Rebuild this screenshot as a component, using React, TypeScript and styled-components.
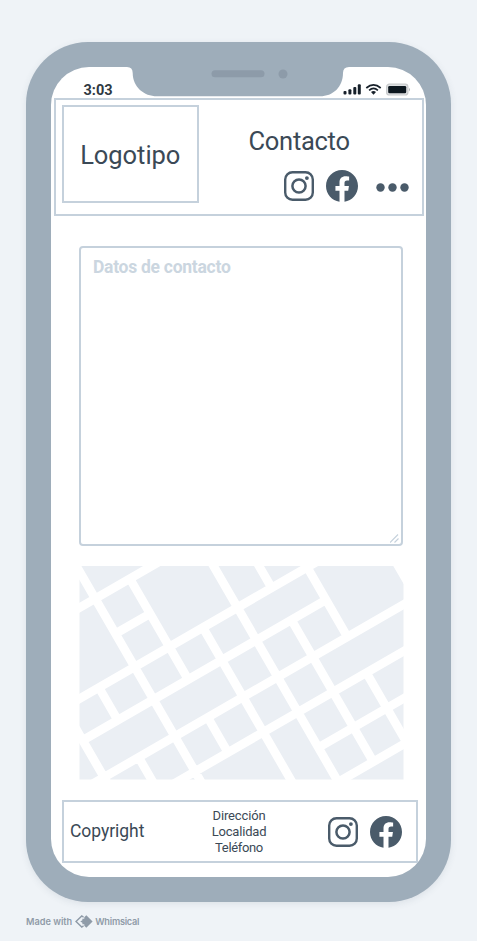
import React from "react";
import styled, { createGlobalStyle } from "styled-components";

const ink = "#3b4956";
const iconInk = "#4a5b6a";
const line = "#c5d1dc";
const bezel = "#9eadba";

const GlobalStyle = createGlobalStyle`
  *, *::before, *::after { box-sizing: border-box; }
  body { margin: 0; background: #eff3f7; font-family: Roboto, "Liberation Sans", sans-serif; }
`;

const Page = styled.main`
  width: 477px;
  height: 941px;
  padding: 42px 0 0 26px;
  overflow: hidden;
`;

const Phone = styled.div`
  width: 424.5px;
  height: 859.5px;
  padding: 25px 24.5px 24.5px 25px;
  border-radius: 62px;
  background: ${bezel};
  box-shadow: 0 2px 7px rgba(60, 80, 100, 0.1);
`;

const Screen = styled.div`
  position: relative;
  display: flex;
  flex-direction: column;
  width: 375px;
  height: 810px;
  border-radius: 38px;
  background: #fff;
`;

const Notch = styled.svg`
  position: absolute;
  left: 76px;
  top: -1px;
`;

const StatusBar = styled.div`
  display: flex;
  justify-content: space-between;
  align-items: flex-start;
  height: 30.5px;
  padding: 0 15px 0 32.5px;
`;

const Indicators = styled.svg`
  margin-top: 16px;
`;

const Label = styled.span<{ $size: number; $spacing?: number; $weight?: number; $color?: string; $leading?: number }>`
  font-size: ${(p) => p.$size}px;
  line-height: ${(p) => p.$leading ?? Math.round(p.$size * 1.2)}px;
  letter-spacing: ${(p) => p.$spacing ?? 0}px;
  font-weight: ${(p) => p.$weight ?? 400};
  color: ${(p) => p.$color ?? ink};
  white-space: nowrap;
`;

const Clock = styled(Label)`
  margin-top: 15px;
`;

const Header = styled.header`
  display: flex;
  width: 369.5px;
  height: 118.5px;
  margin-left: 3px;
  padding: 6px;
  border: 2px solid ${line};
  flex-shrink: 0;
`;

const LogoBox = styled.div`
  display: flex;
  align-items: center;
  justify-content: center;
  width: 136.5px;
  height: 98px;
  margin-top: -0.5px;
  padding-top: 2px;
  border: 2px solid ${line};
`;

const HeaderSide = styled.div`
  display: flex;
  flex-direction: column;
  flex: 1;
  padding: 20px 7px 0 50px;
`;

const HeaderIcons = styled.div`
  display: flex;
  justify-content: flex-end;
  align-items: center;
  margin-top: 13px;
`;

const Icon = styled.svg<{ $gap?: number }>`
  flex-shrink: 0;
  margin-left: ${(p) => p.$gap ?? 0}px;
`;

const MoreDots = styled(Icon)`
  margin-top: 3px;
`;

const ContactArea = styled.section`
  position: relative;
  width: 323.5px;
  height: 300px;
  margin: 29.5px 0 0 28px;
  padding: 9px 12px;
  border: 2px solid ${line};
  border-radius: 4px;
  flex-shrink: 0;
`;

const ResizeGrip = styled.svg`
  position: absolute;
  right: 2px;
  bottom: 1px;
`;

const MapPanel = styled.svg`
  display: block;
  margin: 20.5px 0 0 28px;
  flex-shrink: 0;
`;

const Footer = styled.footer`
  display: grid;
  grid-template-columns: 100px 138px 1fr;
  align-items: center;
  width: 355.5px;
  height: 63.5px;
  margin: 19.5px 0 0 11px;
  padding: 1px 14px 0 6px;
  border: 2px solid ${line};
  flex-shrink: 0;
`;

const Address = styled.div`
  display: flex;
  flex-direction: column;
  align-items: center;
`;

const FooterIcons = styled.div`
  display: flex;
  justify-content: flex-end;
  align-items: center;
`;

const Credit = styled.div`
  display: flex;
  align-items: center;
  height: 16px;
  margin-top: 12px;
  color: #8f9ba8;
  font-family: Inter, sans-serif;
`;

const CreditText = styled.span<{ $spacing: number }>`
  font-size: 9.2px;
  font-weight: 600;
  line-height: 16px;
  letter-spacing: ${(p) => p.$spacing}px;
  white-space: nowrap;
`;

const CreditMark = styled.svg`
  margin: 0 2px 0 3px;
`;

const InstagramIcon = () => (
  <Icon width="30" height="30" viewBox="0 0 30 30" fill="none" stroke={iconInk}>
    <rect x="1.2" y="1.2" width="27.6" height="27.6" rx="7.3" strokeWidth="2.4" />
    <circle cx="15" cy="15" r="6.6" strokeWidth="2.5" />
    <circle cx="22.9" cy="7.1" r="1.9" fill={iconInk} stroke="none" />
  </Icon>
);

const FacebookIcon = () => (
  <Icon $gap={12} width="32" height="32" viewBox="8 8 496 496" fill={iconInk}>
    <path d="M504 256C504 119 393 8 256 8S8 119 8 256c0 123.78 90.69 226.38 209.25 245V327.69h-63V256h63v-54.64c0-62.15 37-96.48 93.67-96.48 27.14 0 55.52 4.84 55.52 4.84v61h-31.28c-30.8 0-40.41 19.12-40.41 38.73V256h68.78l-11 71.69h-57.78V501C413.31 482.38 504 379.78 504 256z" />
  </Icon>
);

const MoreIcon = () => (
  <MoreDots $gap={17.5} width="33" height="9" viewBox="0 0 33 9" fill={iconInk}>
    <circle cx="4.5" cy="4.5" r="4.2" />
    <circle cx="16.5" cy="4.5" r="4.2" />
    <circle cx="28.5" cy="4.5" r="4.2" />
  </MoreDots>
);

// Streets as [intercept, x start, x end] along two perpendicular directions.
const risingStreets = [
  [42, -10, 85],
  [133, -10, 245],
  [176.5, 3.7, 246.8],
  [225.7, 10, 340],
  [272.5, 90, 340],
  [319.7, 240, 340],
  [365.6, 250, 340],
  [88.7, 36.5, 71],
];
const fallingStreets = [
  [4.5, -10, 130],
  [-75.5, 51, 109],
  [-233, 128, 265],
  [-153, 124, 220],
  [87, 20, 38.8],
  [168, -10, 35],
  [88, 59.6, 80],
  [-71.5, 128.7, 149],
  [-311.8, 174, 192.6],
  [-394, 228.3, 268.4],
  [-314, 212.4, 294.3],
  [-391, 287.4, 340],
  [-553, 312, 340],
];

const street = (slope: number) => ([c, from, to]: number[]) =>
  `M${from} ${c + slope * from}L${to} ${c + slope * to}`;

const streets = [
  ...risingStreets.map(street(-0.577)),
  ...fallingStreets.map(street(1.732)),
].join("");

export default function App() {
  return (
    <>
      <GlobalStyle />
      <Page>
        <Phone>
          <Screen>
            <Notch width="229" height="31" viewBox="0 0 229 31">
              <path
                d="M0 0H229V1H222Q216 1 216 7C216 21 206 30.3 193 30.3H30C17 30.3 5.7 21 5.7 7Q5.7 1 0 1Z"
                fill={bezel}
              />
              <rect x="84.5" y="4.3" width="53" height="7" rx="3.5" fill="#8d9ba9" />
              <circle cx="156" cy="8" r="4.5" fill="#8d9ba9" />
            </Notch>
            <StatusBar>
              <Clock $size={14.5} $weight={700} $leading={18} $color="#303942">
                3:03
              </Clock>
              <Indicators width="68" height="14" viewBox="0 0 68 14" fill="#17202a">
                <rect x="0.5" y="8" width="3" height="3.5" rx="1" />
                <rect x="5.4" y="6.3" width="3" height="5.2" rx="1" />
                <rect x="10.3" y="4" width="3" height="7.5" rx="1" />
                <rect x="14.8" y="1.3" width="3" height="10.2" rx="1" />
                <g fill="none" stroke="#17202a" strokeWidth="1.7">
                  <path d="M23.3 5Q30.5-1.3 37.7 5" />
                  <path d="M26.1 7.4Q30.5 3.4 34.9 7.4" />
                </g>
                <path d="M28 9Q30.5 7.2 33 9L30.5 11.7Z" />
                <rect x="43.6" y="1.2" width="21.3" height="10.8" rx="2.8" fill="#dfe1e3" stroke="#c8cacc" strokeWidth="1.2" />
                <rect x="45.2" y="2.9" width="18" height="7.4" rx="1.3" fill="#0d171f" />
                <path d="M66 4.7Q68 6.5 66 8.4Z" fill="#b4b7ba" />
              </Indicators>
            </StatusBar>
            <Header>
              <LogoBox>
                <Label $size={25.5} $spacing={-0.05}>Logotipo</Label>
              </LogoBox>
              <HeaderSide>
                <Label $size={25.5} $spacing={-0.28} $leading={31}>Contacto</Label>
                <HeaderIcons>
                  <InstagramIcon />
                  <FacebookIcon />
                  <MoreIcon />
                </HeaderIcons>
              </HeaderSide>
            </Header>
            <ContactArea>
              <Label $size={17.5} $weight={700} $spacing={-0.27} $color="#cbd6e0">Datos de contacto</Label>
              <ResizeGrip width="9" height="9" viewBox="0 0 9 9" stroke="#c5d1dc" strokeWidth="1.1">
                <path d="M0 8.5L8 0.5M4.5 8.5L8.5 4.5" />
              </ResizeGrip>
            </ContactArea>
            <MapPanel width="324.5" height="214" viewBox="0 0 324.5 214">
              <rect x="0.5" width="324" height="213.5" fill="#ebeff4" />
              <path d={streets} stroke="#fff" strokeWidth="8.7" />
              <path d="M319 0H325V10Z" fill="#fff" />
            </MapPanel>
            <Footer>
              <Label $size={17.5} $spacing={-0.05}>Copyright</Label>
              <Address>
                <Label $size={13} $spacing={-0.15} $leading={16}>Dirección</Label>
                <Label $size={13} $spacing={-0.2} $leading={16}>Localidad</Label>
                <Label $size={13} $spacing={-0.35} $leading={16}>Teléfono</Label>
              </Address>
              <FooterIcons>
                <InstagramIcon />
                <FacebookIcon />
              </FooterIcons>
            </Footer>
          </Screen>
        </Phone>
        <Credit>
          <CreditText $spacing={0}>Made with</CreditText>
          <CreditMark width="18" height="13" viewBox="0 0 18 13">
            <path
              d="M8.6 2.2L6.8 0.9L1 6.5L6.8 12.1L8.6 10.8"
              fill="none"
              stroke="#8f9ba8"
              strokeWidth="1.4"
            />
            <path d="M11.3 0.3L17.6 6.5L11.3 12.7L9.3 10.7L9.3 9.3L7.4 9.3L7.4 7.7L5.2 6.5L7.4 5.3L7.4 3.7L9.3 3.7L9.3 2.3Z" fill="#8f9ba8" />
          </CreditMark>
          <CreditText $spacing={-0.25}>Whimsical</CreditText>
        </Credit>
      </Page>
    </>
  );
}
